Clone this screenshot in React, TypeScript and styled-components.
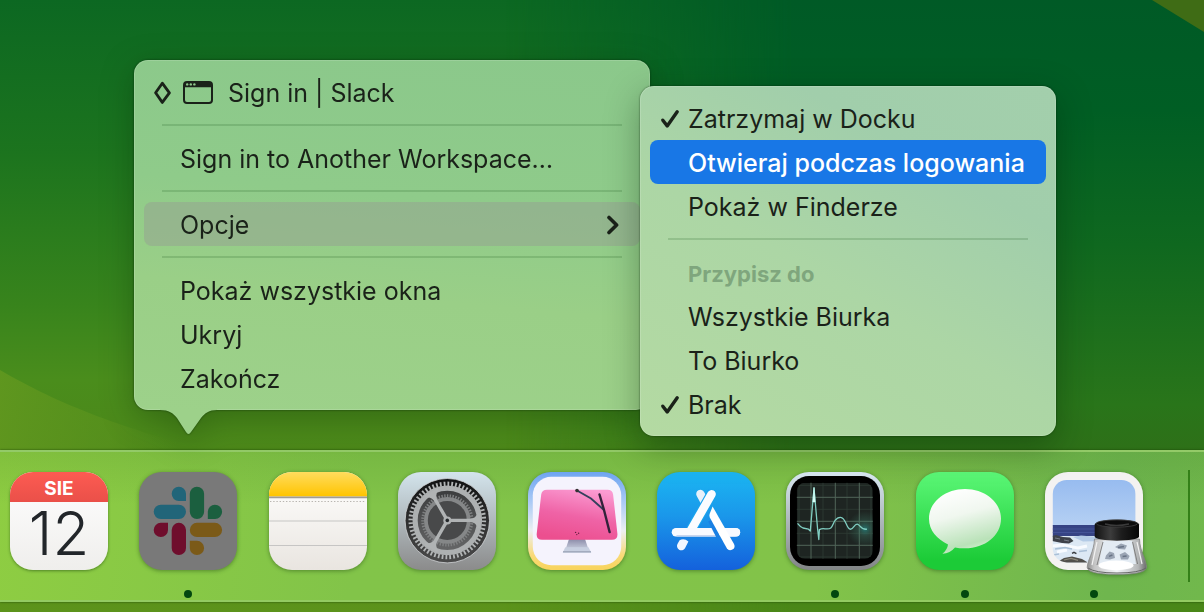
import React from "react";
import styled, { createGlobalStyle } from "styled-components";

const GlobalStyle = createGlobalStyle`
  *, *::before, *::after { box-sizing: border-box; }
  body { margin: 0; font-family: Inter, "Liberation Sans", sans-serif; }
  button { font: inherit; color: inherit; border: 0; padding: 0; background: none; text-align: left; }
  svg { display: block; }
`;

const Desktop = styled.main`
  position: relative;
  display: flex;
  flex-direction: column;
  justify-content: flex-end;
  min-height: 100vh;
  overflow: hidden;
  padding-bottom: 10px;
  background: #1c741e;
`;

const WallpaperArt = styled.svg`
  position: absolute;
  inset: 0;
  width: 100%;
  height: 100%;
`;

/* ---------- menus ---------- */

const DockMenu = styled.div`
  position: absolute;
  left: 134px;
  top: 60px;
  width: 516px;
  filter: drop-shadow(0 0 1px rgba(0, 30, 0, 0.6)) drop-shadow(0 8px 16px rgba(0, 30, 0, 0.3));
`;

const MenuPanel = styled.ul<{ $tone: "main" | "sub" }>`
  margin: 0;
  padding: 10px;
  list-style: none;
  border-radius: 14px;
  color: #1a2219;
  font-size: 25px;
  line-height: 42px;
  background: ${(p) =>
    p.$tone === "main"
      ? "linear-gradient(185deg, #8bc88b 0%, #8fcb8a 40%, #9acf87 66%, #9dd18a 100%)"
      : "linear-gradient(30deg, #b4daa2 0%, #acd6a5 45%, #a1ceab 75%, #a3cfac 100%)"};
  box-shadow: inset 0 0 0 1px rgba(255, 255, 255, 0.14);
`;

const MenuTail = styled.svg`
  position: absolute;
  left: 26px;
  top: 100%;
  margin-top: -1px;
`;

const SubMenu = styled.div`
  position: absolute;
  left: 640px;
  top: 86px;
  width: 416px;
  border-radius: 14px;
  box-shadow: 0 0 2px rgba(0, 30, 0, 0.7), 0 10px 34px rgba(0, 30, 0, 0.34);
`;

const MenuRow = styled.button<{ $lead: number; $state?: "open" | "selected" }>`
  display: grid;
  grid-template-columns: ${(p) => p.$lead}px 1fr auto;
  align-items: center;
  width: 100%;
  height: 44px;
  padding: 2px 20px 0 0;
  border-radius: 8px;
  white-space: nowrap;
  font-weight: ${(p) => (p.$state === "selected" ? 500 : 400)};
  color: ${(p) => (p.$state === "selected" ? "#fff" : "inherit")};
  background: ${(p) =>
    p.$state === "selected" ? "#1877e6" : p.$state === "open" ? "rgba(150, 160, 145, 0.5)" : "transparent"};
`;

const Lead = styled.span`
  padding-left: 10px;
`;

const RowLabel = styled.span`
  display: flex;
  align-items: center;
  gap: 15px;
`;

const MenuHeading = styled.li`
  height: 44px;
  padding: 3px 0 0 38px;
  font-size: 22px;
  font-weight: 700;
  color: #7fa67d;
`;

const Divider = styled.li`
  height: 22px;
  padding: 10px 18px;

  &::before {
    content: "";
    display: block;
    height: 2px;
    background: rgba(30, 90, 30, 0.18);
  }
`;

const Check = () => (
  <svg width="20" height="20" viewBox="0 0 20 20" fill="none" stroke="#1a2219" strokeWidth="3.4" strokeLinecap="round" strokeLinejoin="round">
    <path d="M2.8 11.2 7.2 16.9 17.2 2.8" />
  </svg>
);

const Diamond = () => (
  <svg width="18" height="24" viewBox="0 0 18 24" fill="none" stroke="#1a2219" strokeWidth="2.8" strokeLinejoin="round">
    <path d="M8.3 2.2 15.4 11.8 8.3 21.4 1.6 11.8Z" />
  </svg>
);

const WindowGlyph = styled.svg`
  margin-left: 3px;
`;

const WindowIcon = () => (
  <WindowGlyph width="30" height="24" viewBox="0 0 30 24">
    <rect x="1" y="1" width="28" height="21" rx="3" fill="none" stroke="#1a2219" strokeWidth="2" />
    <path d="M1 6.2V4a3 3 0 0 1 3-3h22a3 3 0 0 1 3 3v2.2Z" fill="#1a2219" />
    <g fill="#8fc98c">
      <circle cx="4.2" cy="3.4" r="1.2" />
      <circle cx="7.8" cy="3.4" r="1.2" />
      <circle cx="11.4" cy="3.4" r="1.2" />
    </g>
  </WindowGlyph>
);

const Chevron = () => (
  <svg width="14" height="20" viewBox="0 0 14 20" fill="none" stroke="#1a2219" strokeWidth="3.6" strokeLinecap="round" strokeLinejoin="round">
    <path d="M3 2.4 10.6 10 3 17.6" />
  </svg>
);

type RowProps = {
  label: string;
  lead?: React.ReactNode;
  icon?: React.ReactNode;
  sub?: boolean;
  arrow?: boolean;
  state?: "open" | "selected";
};

const Row = ({ label, lead, icon, sub, arrow, state }: RowProps) => (
  <li>
    <MenuRow type="button" $lead={sub ? 38 : 36} $state={state}>
      <Lead>{lead}</Lead>
      <RowLabel>
        {icon}
        {label}
      </RowLabel>
      {arrow && <Chevron />}
    </MenuRow>
  </li>
);

/* ---------- dock ---------- */

const DockBar = styled.nav`
  position: relative;
  display: flex;
  height: 152px;
  padding: 20px 14px 0 10px;
  border-top: 2px solid #93ca68;
  border-bottom: 2px solid #93cb62;
  background: linear-gradient(180deg, rgba(50, 110, 30, 0.14), transparent 36%),
    linear-gradient(97deg, #8ecd42 0%, #82c449 30%, #82c349 68%, #6fb64e 92%, #71b84c 100%);
  box-shadow: 0 0 2px rgba(20, 60, 0, 0.8);
`;

const DockItems = styled.div`
  display: flex;
  flex: 1;
  justify-content: space-between;
`;

const DockItem = styled.button`
  display: flex;
  flex-direction: column;
  align-items: center;
  gap: 20px;
  width: 98px;
  height: 126px;
`;

const DockDivider = styled.div`
  width: 2px;
  height: 112px;
  margin: -2px 0 0 45px;
  background: #348018;
`;

const RunningDot = styled.span`
  width: 8px;
  height: 8px;
  border-radius: 50%;
  background: #02480f;
`;

const IconArt = styled.svg`
  width: 98px;
  height: 98px;
  overflow: visible;
  filter: drop-shadow(0 1px 2px rgba(20, 60, 10, 0.45));
`;

const CalendarTile = styled.span`
  display: block;
  width: 98px;
  height: 98px;
  overflow: hidden;
  border-radius: 23px;
  text-align: center;
  color: #22262a;
  background: linear-gradient(#fff, #efeeec);
  box-shadow: 0 1px 3px rgba(20, 60, 10, 0.5);
`;

const CalendarMonth = styled.span`
  display: block;
  height: 30px;
  padding-top: 2px;
  color: #fff;
  font-size: 19px;
  font-weight: 700;
  line-height: 30px;
  background: linear-gradient(#fd5b52, #ea5049);
`;

const CalendarDay = styled.span`
  display: block;
  font-size: 60px;
  font-weight: 300;
  line-height: 62px;
`;

const Calendar = () => (
  <CalendarTile>
    <CalendarMonth>SIE</CalendarMonth>
    <CalendarDay>12</CalendarDay>
  </CalendarTile>
);

const Slack = () => (
  <IconArt viewBox="0 0 98 98">
    <rect width="98" height="98" rx="23" fill="#797979" />
    <g fill="#216579">
      <path d="M47 29V21.8A7.15 7.15 0 1 0 39.8 29Z" />
      <rect x="14.7" y="32.7" width="32.3" height="14.3" rx="7.15" />
    </g>
    <g fill="#1b5f3f">
      <rect x="50.8" y="14.7" width="14.3" height="32.3" rx="7.15" />
      <path d="M68.8 47V39.8A7.15 7.15 0 1 1 76 47Z" />
    </g>
    <g fill="#6f0e2d">
      <path d="M29 50.8V58A7.15 7.15 0 1 1 21.8 50.8Z" />
      <rect x="32.7" y="50.8" width="14.3" height="32.3" rx="7.15" />
    </g>
    <g fill="#7b5a18">
      <rect x="50.8" y="50.8" width="32.3" height="14.3" rx="7.15" />
      <path d="M50.8 68.8V76A7.15 7.15 0 1 0 58 68.8Z" />
    </g>
  </IconArt>
);

const Notes = () => (
  <IconArt viewBox="0 0 98 98">
    <defs>
      <linearGradient id="notesPaper" x2="0" y2="1">
        <stop offset="0.25" stopColor="#faf9f7" />
        <stop offset="1" stopColor="#e9e5e0" />
      </linearGradient>
      <linearGradient id="notesTop" x2="0" y2="1">
        <stop offset="0" stopColor="#ffdc5e" />
        <stop offset="1" stopColor="#ffc400" />
      </linearGradient>
    </defs>
    <rect width="98" height="98" rx="23" fill="url(#notesPaper)" />
    <path d="M0 24.4V23A23 23 0 0 1 23 0H75A23 23 0 0 1 98 23V24.4Z" fill="url(#notesTop)" />
    <path d="M0 25.4H98" stroke="#a09c96" strokeWidth="1.8" />
    <path d="M1 29.5H97" stroke="#b9b6b1" strokeWidth="1.2" strokeDasharray="1.4 1.8" />
    <path d="M0 49H98M0 73.5H98" stroke="#c6c5c4" strokeWidth="1.1" />
  </IconArt>
);

const Settings = () => (
  <IconArt viewBox="0 0 98 98">
    <defs>
      <linearGradient id="setBody" x2="0" y2="1">
        <stop offset="0" stopColor="#d3e4ec" />
        <stop offset="1" stopColor="#8b8b8b" />
      </linearGradient>
      <linearGradient id="setWell" x2="0" y2="1">
        <stop offset="0" stopColor="#101112" />
        <stop offset="1" stopColor="#4b4b4b" />
      </linearGradient>
      <linearGradient id="setFloor" x2="0" y2="1">
        <stop offset="0" stopColor="#3a3b3c" />
        <stop offset="1" stopColor="#666768" />
      </linearGradient>
    </defs>
    <rect width="98" height="98" rx="23" fill="url(#setBody)" />
    <circle cx="49.3" cy="48.7" r="42.2" fill="url(#setWell)" stroke="#d0d3d5" strokeWidth="0.8" />
    <circle cx="49.3" cy="48.4" r="36.6" fill="none" stroke="#b2b5b6" strokeWidth="4.4" strokeDasharray="1.8 2.03" />
    <circle cx="49.3" cy="48.4" r="32.2" fill="url(#setFloor)" stroke="#adb0b1" strokeWidth="5.2" />
    <circle cx="49.3" cy="48.4" r="24.6" fill="none" stroke="#7f8182" strokeWidth="3" strokeDasharray="1.4 1.4" />
    <circle cx="49.3" cy="48.4" r="21.4" fill="#48494a" stroke="#858788" strokeWidth="3.8" />
    <g fill="#b0b3b4">
      <path d="M49.3 46.7H72Q78 46.5 79.6 41H82V56H79.6Q78 50.3 72 50.1H49.3Z" />
      <path d="M49.3 46.7H72Q78 46.5 79.6 41H82V56H79.6Q78 50.3 72 50.1H49.3Z" transform="rotate(120 49.3 48.4)" />
      <path d="M49.3 46.7H72Q78 46.5 79.6 41H82V56H79.6Q78 50.3 72 50.1H49.3Z" transform="rotate(240 49.3 48.4)" />
      <circle cx="49.3" cy="48.4" r="4" />
    </g>
    <circle cx="49.3" cy="48.4" r="1.8" fill="#25292b" />
  </IconArt>
);

const CleanMyMac = () => (
  <IconArt viewBox="0 0 98 98">
    <defs>
      <linearGradient id="cmmFrame" x2="0" y2="1">
        <stop offset="0" stopColor="#6ea4f1" />
        <stop offset="0.3" stopColor="#a9c9f5" />
        <stop offset="0.6" stopColor="#eceff0" />
        <stop offset="0.85" stopColor="#f9da78" />
        <stop offset="1" stopColor="#f8d35c" />
      </linearGradient>
      <linearGradient id="cmmScreen" x1="0.7" y1="0" x2="0.4" y2="1">
        <stop offset="0" stopColor="#fb9bd2" />
        <stop offset="0.55" stopColor="#ef63a6" />
        <stop offset="1" stopColor="#ec4f8f" />
      </linearGradient>
      <linearGradient id="cmmStand" x2="0" y2="1">
        <stop offset="0" stopColor="#8b8ba8" />
        <stop offset="1" stopColor="#bfc4d6" />
      </linearGradient>
    </defs>
    <rect width="98" height="98" rx="23" fill="url(#cmmFrame)" />
    <rect x="4.8" y="4.8" width="88.4" height="88.4" rx="18.5" fill="#f5f3fd" />
    <path d="M41 67H57L60 76H38Z" fill="url(#cmmStand)" />
    <path d="M37.3 75.3H60.5L63.3 80.8H34.7Z" fill="#c7cfe0" />
    <path d="M35 79.8H63" stroke="#9aa3b5" strokeWidth="1.2" />
    <path d="M19 17.7H79.5Q84.6 17.7 85.1 22.4L89.4 61.8Q89.9 67.7 84 67.7H14Q8.2 67.7 8.7 61.8L13.2 22.4Q13.8 17.7 19 17.7Z" fill="url(#cmmScreen)" />
    <path d="M49 18.5 63 26.5 76 38" stroke="#34405c" strokeWidth="1.9" fill="none" />
    <path d="M71.5 22.5 76 38 81.6 60" stroke="#33223a" strokeWidth="2.4" strokeLinecap="round" fill="none" />
    <circle cx="49" cy="18.6" r="1.8" fill="#333" />
    <g fill="#65203f">
      <circle cx="47.6" cy="60.4" r="0.7" />
      <circle cx="50.6" cy="61.2" r="0.7" />
      <circle cx="48.8" cy="62.6" r="0.7" />
    </g>
  </IconArt>
);

const AppStore = () => (
  <IconArt viewBox="0 0 98 98">
    <defs>
      <linearGradient id="storeBg" x2="0" y2="1">
        <stop offset="0" stopColor="#1bb6f2" />
        <stop offset="0.45" stopColor="#1a97ea" />
        <stop offset="1" stopColor="#1461dc" />
      </linearGradient>
    </defs>
    <rect width="98" height="98" rx="23" fill="url(#storeBg)" />
    <path d="M43.4 22 47.5 29.4" stroke="#e6f0fa" strokeWidth="8.4" strokeLinecap="round" />
    <path d="M56 19.6 34 58" stroke="#1aa4ee" strokeWidth="10.6" />
    <path d="M54.6 22.2 34.4 57.4" stroke="#fbfcff" strokeWidth="8.4" strokeLinecap="round" />
    <path d="M18.9 60.3H79" stroke="#f8faff" strokeWidth="8.4" strokeLinecap="round" />
    <path d="M20 63.8H78" stroke="#c8d5ee" strokeWidth="1.4" strokeLinecap="round" />
    <path d="M56.4 47 66 66" stroke="#197fe3" strokeWidth="11.6" />
    <path d="M66 60.4H79" stroke="#f8faff" strokeWidth="8.2" strokeLinecap="round" />
    <path d="M52.6 42 55.6 34.4 77 72A4.2 4.2 0 0 1 69.8 76.3L52.8 45.4Q52 43.6 52.6 42Z" fill="#fff" />
    <path d="M20.6 71.8 22.6 68.2Q27 65.8 31.4 69.4L28 76.2A4.2 4.2 0 0 1 20.6 71.8Z" fill="#f2f6ff" />
  </IconArt>
);

const ActivityMonitor = () => (
  <IconArt viewBox="0 0 98 98">
    <defs>
      <linearGradient id="amRim" x2="0" y2="1">
        <stop offset="0" stopColor="#d9e9f2" />
        <stop offset="1" stopColor="#828586" />
      </linearGradient>
      <radialGradient id="amGlow">
        <stop offset="0" stopColor="#2aa5a0" stopOpacity="0.6" />
        <stop offset="0.4" stopColor="#3f7c68" stopOpacity="0.35" />
        <stop offset="1" stopColor="#3f7c68" stopOpacity="0" />
      </radialGradient>
      <clipPath id="amClip">
        <rect x="10.8" y="10.8" width="76" height="76" rx="8" />
      </clipPath>
    </defs>
    <rect width="98" height="98" rx="23" fill="url(#amRim)" />
    <rect x="4" y="4" width="90" height="90" rx="19" fill="#000" />
    <g clipPath="url(#amClip)">
      <rect x="10.8" y="10.8" width="76" height="76" fill="#1e2522" />
      <path d="M13 0V98M37 0V98M61 0V98M85 0V98M0 13.3H98M0 37.3H98M0 61.3H98M0 85H98" stroke="#2f3c35" strokeWidth="0.8" />
      <path d="M25 0V98M49.3 0V98M73.3 0V98M0 25.3H98M0 49.3H98M0 73.3H98" stroke="#506659" strokeWidth="1" />
      <circle cx="79" cy="57" r="18" fill="url(#amGlow)" />
    </g>
    <path
      d="M11.5 51.3Q14 54.5 17 56L22.5 57.2 24.3 59 28 16 31.6 57 32.8 67.5 33.4 57.6Q36 56.2 39 56.8C47 58 46 53 49 48.5Q51.5 45.2 54.5 45.3C60 45.6 60 56 64 57.2 67.5 58 68 52 71.2 52.1 74.5 52.4 74 58 81 57.2"
      fill="none"
      stroke="#80cec2"
      strokeWidth="1.3"
      strokeLinejoin="round"
    />
    <path d="M26.8 30 28 15.4 29.2 30Z" fill="#e3fffa" stroke="#c6fff5" strokeWidth="0.6" />
  </IconArt>
);

const Messages = () => (
  <IconArt viewBox="0 0 98 98">
    <defs>
      <linearGradient id="msgBg" x2="0" y2="1">
        <stop offset="0" stopColor="#5cf777" />
        <stop offset="0.9" stopColor="#1ccb37" />
      </linearGradient>
      <linearGradient id="msgBubble" x1="0.3" y1="0" x2="0.6" y2="1">
        <stop offset="0" stopColor="#fff" />
        <stop offset="0.4" stopColor="#f0f7ef" />
        <stop offset="0.85" stopColor="#b9e2b8" />
        <stop offset="1" stopColor="#d9f5d5" />
      </linearGradient>
    </defs>
    <rect width="98" height="98" rx="23" fill="url(#msgBg)" />
    <path d="M49 17C69 17 85 30 85 46.7S69 76.3 49 76.3Q43 76.3 39 75.4 34.2 81 26.4 81.7 31.4 77.6 32 72.4C21 67 13 58.7 13 46.7 13 30 29 17 49 17Z" fill="url(#msgBubble)" />
  </IconArt>
);

const Preview = () => (
  <IconArt viewBox="0 0 98 98">
    <defs>
      <linearGradient id="pvSky" x2="0" y2="1">
        <stop offset="0" stopColor="#92b8ef" />
        <stop offset="1" stopColor="#b5d0f3" />
      </linearGradient>
      <linearGradient id="pvCap" x2="1" y2="0">
        <stop offset="0" stopColor="#111" />
        <stop offset="0.35" stopColor="#3d3d3d" />
        <stop offset="0.6" stopColor="#1d1d1d" />
        <stop offset="1" stopColor="#050505" />
      </linearGradient>
      <linearGradient id="pvGlass" x2="1" y2="0">
        <stop offset="0" stopColor="#8c8c8c" />
        <stop offset="0.12" stopColor="#c4c4c4" />
        <stop offset="0.5" stopColor="#f2f5f8" />
        <stop offset="0.86" stopColor="#b4b6b7" />
        <stop offset="1" stopColor="#6a6a6a" />
      </linearGradient>
      <clipPath id="pvPhoto">
        <rect x="7.8" y="8" width="82.6" height="82.4" rx="14" />
      </clipPath>
    </defs>
    <rect width="98" height="98" rx="23" fill="#f3f2f1" />
    <g clipPath="url(#pvPhoto)">
      <rect width="98" height="54" fill="url(#pvSky)" />
      <rect y="53" width="98" height="12" fill="#364384" />
      <path d="M0 57H50M0 60.5H60" stroke="#47589a" strokeWidth="0.8" />
      <rect y="64" width="98" height="30" fill="#dce8f4" />
      <path d="M28 65 36 63.6 58 65.5V69L38 69.5Z" fill="#b4cbe6" />
      <path d="M7 64 11 63 18 65 25 65.5 28.5 69 24 71.5 17 71 7 69Z" fill="#3e4149" />
      <path d="M10 66 15 67M19 68 24 69" stroke="#777d88" strokeWidth="1" />
      <path d="M7 74 17 73 33 76 42 74M12 80 22 78" stroke="#f8fbff" strokeWidth="3" fill="none" />
      <path d="M10 77 20 75.5 27 77M34 79.5 42 78.5M8 83 14 82" stroke="#a9bfd6" strokeWidth="1.4" fill="none" />
      <path d="M14 89 19 86 27 84.5 37 87 42 90V94H14Z" fill="#514f4b" />
      <path d="M19 88 26 86.4 33 88.4" stroke="#8b8779" strokeWidth="1.2" fill="none" />
      <path d="M27 81.4 29 80.4 31.4 81.6" stroke="#373a3e" strokeWidth="1.5" fill="none" />
    </g>
    <path d="M49.5 67H94.5C95 80 101.5 88 101.5 95.5 100 101 88 102.3 72 102.3S43 101 42.2 95.5C42.4 88 49 80 49.5 67Z" fill="url(#pvGlass)" stroke="#858585" strokeWidth="0.8" />
    <path d="M58 69H87L91 92H54Z" fill="#e3ebf3" />
    <path d="M52 70 47 93M92 70 97 92" stroke="#f1f1f1" strokeWidth="1.2" />
    <path d="M58 70 52 93M87.6 70 92.6 92" stroke="#777" strokeWidth="0.9" />
    <path d="M70 75 76 71.6 82 73.6 80 77.6 74 77ZM61 83.5 64.6 79.4 69 81 70 86 65 87.4 60 87ZM74.6 82.6 80 80 84.6 84 83 87.4 76 87.4Z" fill="#9aa4b3" />
    <path d="M73 75.6 79 74.4M64 84.4 67.4 83M77.6 84.6 81.6 84" stroke="#687385" strokeWidth="1.5" />
    <ellipse cx="71" cy="93.4" rx="17.5" ry="4.8" fill="#fff" />
    <path d="M43 96Q50 101 72 101T101 96" stroke="#666" strokeWidth="1" fill="none" />
    <path d="M49.7 52.5C50 46 94 46 94 52.5V64.5C94 70 50 70 49.7 64.5Z" fill="url(#pvCap)" />
    <ellipse cx="71.9" cy="51.5" rx="20.5" ry="3.6" fill="#0c0c0c" stroke="#3c3c3c" strokeWidth="0.9" />
    <path d="M60 52Q71 55 84 52" stroke="#3a3a3a" strokeWidth="1.3" fill="none" />
  </IconArt>
);

const APPS = [
  { name: "Kalendarz", Icon: Calendar, running: false },
  { name: "Slack", Icon: Slack, running: true },
  { name: "Notatki", Icon: Notes, running: false },
  { name: "Ustawienia systemowe", Icon: Settings, running: false },
  { name: "CleanMyMac", Icon: CleanMyMac, running: false },
  { name: "App Store", Icon: AppStore, running: false },
  { name: "Monitor aktywności", Icon: ActivityMonitor, running: true },
  { name: "Wiadomości", Icon: Messages, running: true },
  { name: "Podgląd", Icon: Preview, running: true },
];

const Wallpaper = () => (
  <WallpaperArt viewBox="0 0 1204 612" preserveAspectRatio="none" aria-hidden="true">
    <defs>
      <linearGradient id="wpBase" x2="0" y2="1">
        <stop offset="0" stopColor="#0c6822" />
        <stop offset="0.25" stopColor="#1c741e" />
        <stop offset="0.5" stopColor="#38841c" />
        <stop offset="0.62" stopColor="#4a8d1c" />
        <stop offset="0.75" stopColor="#4c8719" />
        <stop offset="1" stopColor="#5c931b" />
      </linearGradient>
      <linearGradient id="wpDark" x2="0" y2="1">
        <stop offset="0" stopColor="#005a26" />
        <stop offset="0.18" stopColor="#005e24" />
        <stop offset="0.4" stopColor="#0f681f" />
        <stop offset="0.66" stopColor="#29751a" />
        <stop offset="0.74" stopColor="#2e7018" />
        <stop offset="1" stopColor="#4a8718" />
      </linearGradient>
      <linearGradient id="wpFade" x2="1" y2="0">
        <stop offset="0.42" stopColor="#fff" stopOpacity="0" />
        <stop offset="0.66" stopColor="#fff" />
      </linearGradient>
      <linearGradient id="wpHill" x2="1" y2="0">
        <stop offset="0" stopColor="#62981f" stopOpacity="0.85" />
        <stop offset="0.45" stopColor="#5c941e" stopOpacity="0.6" />
        <stop offset="0.75" stopColor="#548c1c" stopOpacity="0" />
      </linearGradient>
      <mask id="wpMask">
        <rect width="1204" height="612" fill="url(#wpFade)" />
      </mask>
    </defs>
    <rect width="1204" height="612" fill="url(#wpBase)" />
    <rect width="1204" height="612" fill="url(#wpDark)" mask="url(#wpMask)" />
    <path d="M0 370C60 405 120 428 240 460V470H0Z" fill="url(#wpHill)" />
    <path d="M1152 0 1204 32V0Z" fill="#3f6c15" />
  </WallpaperArt>
);

export default function App() {
  return (
    <>
      <GlobalStyle />
      <Desktop>
        <Wallpaper />
        <DockBar aria-label="Dock">
          <DockItems>
            {APPS.map(({ name, Icon, running }) => (
              <DockItem key={name} type="button" aria-label={name}>
                <Icon />
                {running && <RunningDot />}
              </DockItem>
            ))}
          </DockItems>
          <DockDivider />
        </DockBar>

        <DockMenu>
          <MenuPanel $tone="main">
            <Row label="Sign in | Slack" lead={<Diamond />} icon={<WindowIcon />} />
            <Divider />
            <Row label="Sign in to Another Workspace…" />
            <Divider />
            <Row label="Opcje" arrow state="open" />
            <Divider />
            <Row label="Pokaż wszystkie okna" />
            <Row label="Ukryj" />
            <Row label="Zakończ" />
          </MenuPanel>
          <MenuTail width="57" height="27" viewBox="0 0 57 27" aria-hidden="true">
            <path d="M0 0V1C9 1 13 4 17 9L26 23Q28.5 27 31 23L41 9C45 4 49 1 57 1V0Z" fill="#9dd18a" />
          </MenuTail>
        </DockMenu>

        <SubMenu>
          <MenuPanel $tone="sub">
            <Row sub label="Zatrzymaj w Docku" lead={<Check />} />
            <Row sub label="Otwieraj podczas logowania" state="selected" />
            <Row sub label="Pokaż w Finderze" />
            <Divider />
            <MenuHeading>Przypisz do</MenuHeading>
            <Row sub label="Wszystkie Biurka" />
            <Row sub label="To Biurko" />
            <Row sub label="Brak" lead={<Check />} />
          </MenuPanel>
        </SubMenu>
      </Desktop>
    </>
  );
}
